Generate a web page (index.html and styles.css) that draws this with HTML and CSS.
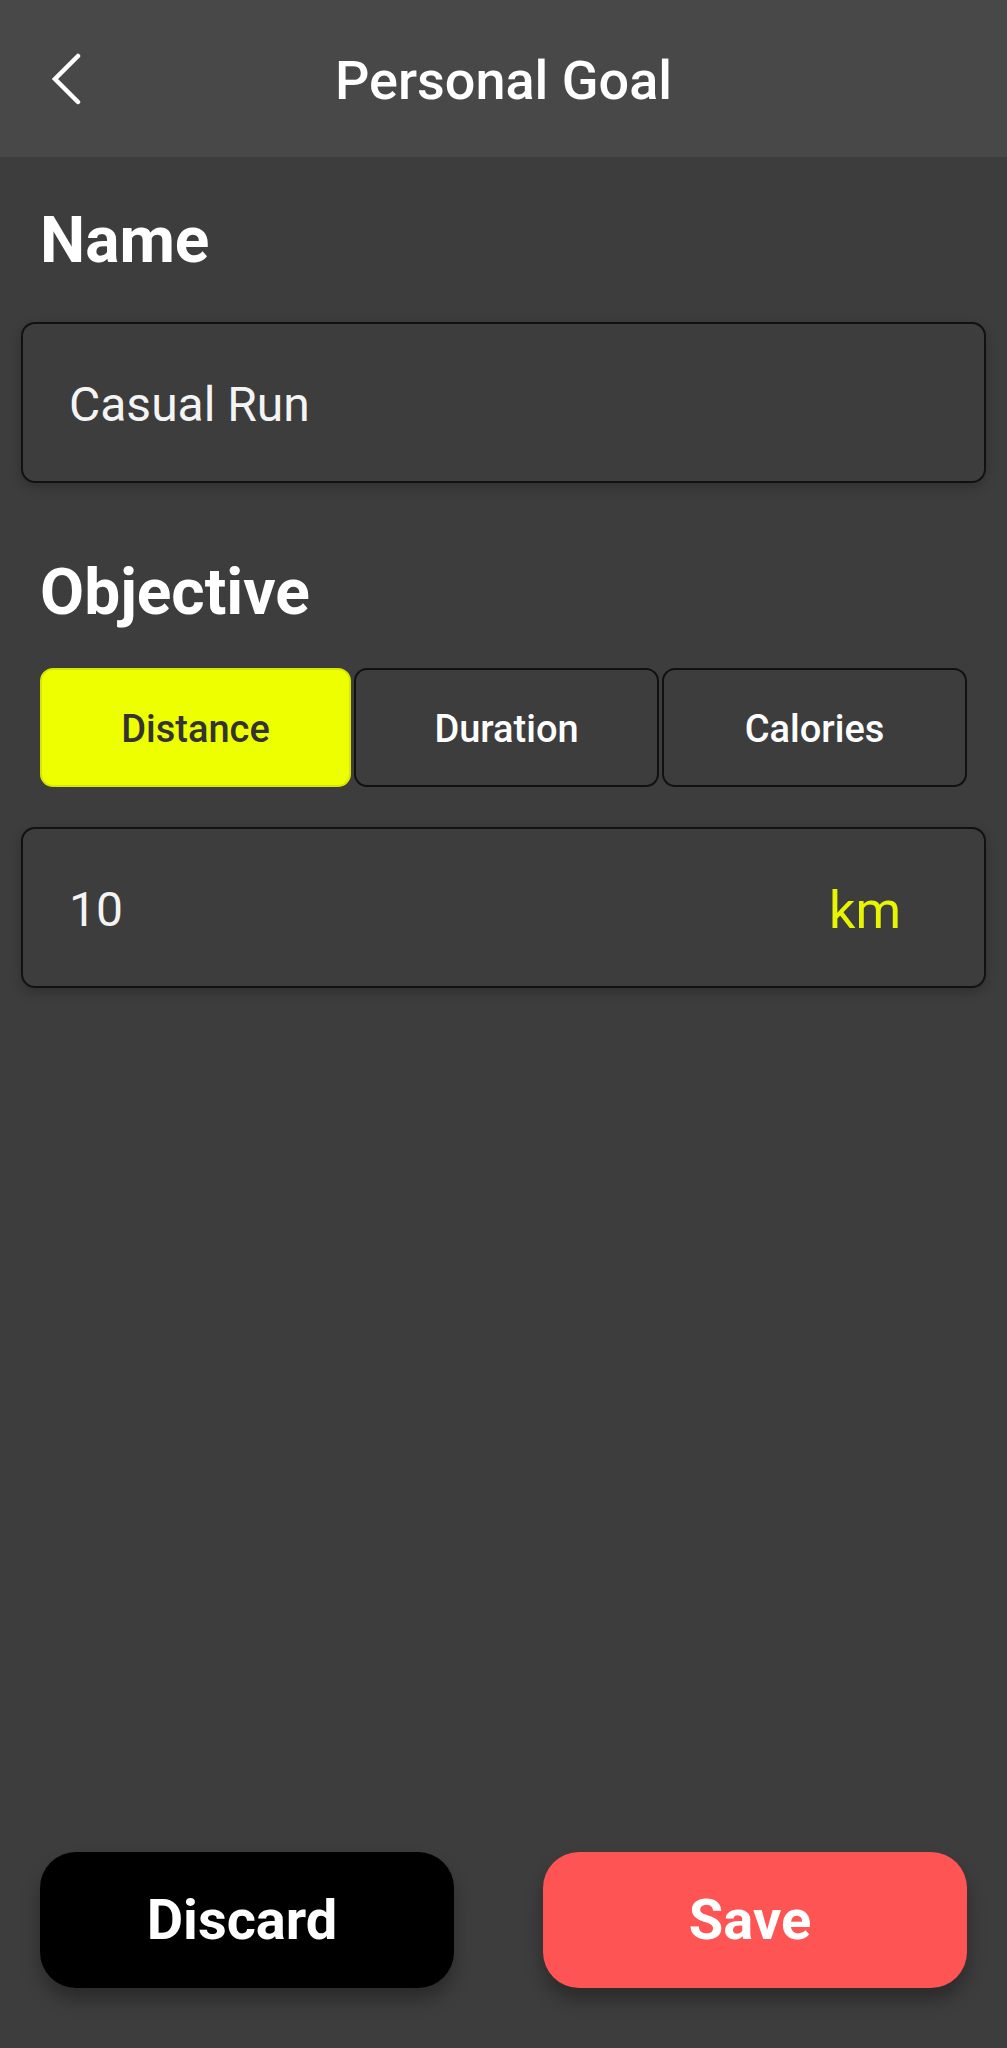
FILE: index.html
```html
<!DOCTYPE html>
<html lang="en">
<head>
<meta charset="utf-8">
<title>Personal Goal</title>
<link rel="stylesheet" href="styles.css">
</head>
<body>
<div class="screen">
  <header class="topbar">
    <div class="back">
      <svg width="32" height="52" viewBox="0 0 32 52" aria-hidden="true">
        <polyline points="27,3 4,26 27,49" fill="none" stroke="#ffffff" stroke-width="4.5" stroke-linecap="round" stroke-linejoin="miter"/>
      </svg>
    </div>
    <h1 class="title">Personal Goal</h1>
    <div class="spacer"></div>
  </header>

  <main class="content">
    <h2 class="label label-name">Name</h2>
    <div class="field">
      <span class="field-text">Casual Run</span>
    </div>

    <h2 class="label label-objective">Objective</h2>
    <div class="tabs">
      <div class="tab tab-active">Distance</div>
      <div class="tab">Duration</div>
      <div class="tab">Calories</div>
    </div>

    <div class="field field-value">
      <span class="field-text">10</span>
      <span class="unit">km</span>
    </div>
  </main>

  <footer class="actions">
    <button class="btn btn-discard">Discard</button>
    <button class="btn btn-save">Save</button>
  </footer>
</div>
</body>
</html>
```

FILE: styles.css
```css
html, body {
  margin: 0;
  padding: 0;
}

body {
  background: #3d3d3d;
  font-family: Roboto, "Liberation Sans", sans-serif;
  color: #ffffff;
}

.screen {
  height: 2048px;
  display: flex;
  flex-direction: column;
}

.topbar {
  height: 157px;
  background: #484848;
  display: grid;
  grid-template-columns: 1fr auto 1fr;
  align-items: center;
}

.back {
  padding-left: 51px;
  display: flex;
  align-items: center;
  height: 52px;
}

.title {
  margin: 5px 0 0 0;
  font-size: 54px;
  font-weight: 500;
  line-height: 64px;
}

.content {
  flex: 1;
  padding: 0 21px;
  display: flex;
  flex-direction: column;
}

.label {
  margin: 0 0 0 19px;
  font-size: 64px;
  font-weight: 700;
  line-height: 74px;
}

.label-name {
  margin-top: 47px;
  margin-bottom: 44px;
}

.label-objective {
  margin-top: 73px;
  margin-bottom: 38px;
}

.field {
  height: 157px;
  border: 2px solid #111111;
  border-radius: 14px;
  box-sizing: content-box;
  display: flex;
  align-items: center;
  justify-content: space-between;
  padding: 0 83px 0 46px;
  box-shadow: 0 4px 12px rgba(0, 0, 0, 0.22);
}

.field-text {
  font-size: 48px;
  font-weight: 400;
  color: #f4f4f4;
  line-height: 1;
  margin-top: 4px;
}

.field-value {
  margin-top: 40px;
}

.unit {
  font-size: 52px;
  font-weight: 400;
  color: #e8f500;
  line-height: 1;
  margin-top: 6px;
}

.tabs {
  margin: 0 19px;
  display: flex;
  gap: 3px;
  height: 119px;
}

.tab {
  flex: 1;
  border: 2px solid #111111;
  border-radius: 13px;
  display: flex;
  align-items: center;
  justify-content: center;
  padding-top: 3px;
  font-size: 38px;
  font-weight: 500;
  color: #ffffff;
}

.tab-active {
  flex: 1.02;
  background: #eeff00;
  border-color: #d9e600;
  color: #333333;
}

.actions {
  display: flex;
  justify-content: space-between;
  padding: 0 40px 60px 40px;
}

.btn {
  height: 136px;
  border: none;
  border-radius: 36px;
  font-family: Roboto, "Liberation Sans", sans-serif;
  font-size: 56px;
  font-weight: 700;
  color: #ffffff;
  box-shadow: 0 12px 18px rgba(0, 0, 0, 0.3);
  padding: 0 10px 0 0;
}

.btn-discard {
  width: 414px;
  background: #000000;
}

.btn-save {
  width: 424px;
  background: #ff5454;
}
```
